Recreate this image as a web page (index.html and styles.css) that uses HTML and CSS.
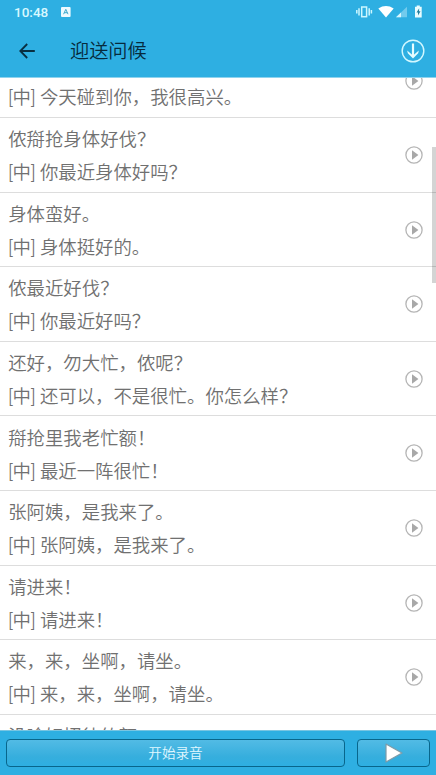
FILE: index.html
```html
<!DOCTYPE html>
<html lang="zh-CN">
<head>
<meta charset="utf-8">
<title>迎送问候</title>
<link rel="stylesheet" href="styles.css">
</head>
<body>
<svg class="defs" width="0" height="0">
  <symbol id="play" viewBox="0 0 18 18"><circle cx="9" cy="9" r="8.1" fill="none" stroke="#b5b5b5" stroke-width="1.3"/><path d="M7 4.2 13.4 9 7 13.8Z" fill="#a8a8a8"/></symbol>
</svg>
<div class="screen">
  <header class="top">
    <div class="status">
      <span class="time">10:48</span>
      <svg class="app" width="10" height="10" viewBox="0 0 10 10"><rect width="9.6" height="10" rx="1" fill="#eefaff"/><path d="M2.6 7.2 4.8 2.3 7 7.2M3.3 5.7H6.3" fill="none" stroke="#40a9cc" stroke-width="1"/></svg>
      <svg class="sys" width="68" height="14" viewBox="0 0 68 14">
        <g fill="none" stroke="#ccf7ff" stroke-width="1.5"><rect x="5.7" y="2" width="4.9" height="9.7"/><path d="M3 3.2V10.4M.8 5V8.6M13.2 3.2V10.4M15.4 5V8.6"/></g>
        <path d="M22.3 3.4Q30-1.4 37.7 3.4L30 12.6Z" fill="#fff"/>
        <path d="M51 1.8V12.2H40Z" fill="#72cbed"/><path d="M45 7.5V12.2H40Z" fill="#d8f7ff"/>
        <path d="M60.7.5H63.8V1.7H65.7V12.4H59V1.7H60.7Z" fill="#e9fcff"/><path d="M63.2 3.3 60.5 7.4H62V10.5L64.5 6.3H63Z" fill="#267f9e"/>
      </svg>
    </div>
    <div class="bar">
      <svg class="back" width="16" height="16" viewBox="0 0 16 16"><path d="M15.8 8H1.5M8.2 1 1.3 8 8.2 15" fill="none" stroke="#082f42" stroke-width="1.8"/></svg>
      <h1>迎送问候</h1>
      <svg class="down" width="24" height="24" viewBox="0 0 24 24"><circle cx="12" cy="12" r="10.8" fill="none" stroke="#d3f8ff" stroke-width="1.4"/><path d="M12 4.5V18" stroke="#e6fdff" stroke-width="2.2" fill="none"/><path d="M6.2 11.4 12 16.4 17.8 11.4 17.2 14.3 12 19.6 6.8 14.3Z" fill="#e6fdff"/></svg>
    </div>
  </header>
  <main class="list">
    <div class="row first"><p>[中] 今天碰到你，我很高兴。</p><svg class="play"><use href="#play"/></svg></div>
    <div class="row"><div><p>侬搿抢身体好伐？</p><p>[中] 你最近身体好吗？</p></div><svg class="play"><use href="#play"/></svg></div>
    <div class="row"><div><p>身体蛮好。</p><p>[中] 身体挺好的。</p></div><svg class="play"><use href="#play"/></svg></div>
    <div class="row"><div><p>侬最近好伐？</p><p>[中] 你最近好吗？</p></div><svg class="play"><use href="#play"/></svg></div>
    <div class="row"><div><p>还好，勿大忙，侬呢？</p><p>[中] 还可以，不是很忙。你怎么样？</p></div><svg class="play"><use href="#play"/></svg></div>
    <div class="row"><div><p>搿抢里我老忙额！</p><p>[中] 最近一阵很忙！</p></div><svg class="play"><use href="#play"/></svg></div>
    <div class="row"><div><p>张阿姨，是我来了。</p><p>[中] 张阿姨，是我来了。</p></div><svg class="play"><use href="#play"/></svg></div>
    <div class="row"><div><p>请进来！</p><p>[中] 请进来！</p></div><svg class="play"><use href="#play"/></svg></div>
    <div class="row"><div><p>来，来，坐啊，请坐。</p><p>[中] 来，来，坐啊，请坐。</p></div><svg class="play"><use href="#play"/></svg></div>
    <div class="row"><div><p>没啥好招待侬额</p></div></div>
    <div class="thumb"></div>
  </main>
  <footer class="bottom">
    <button class="btn record"><span>开始录音</span></button>
    <button class="btn playback"><svg width="20" height="22" viewBox="0 0 20 22"><path d="M2 2 18 11 2 20Z" fill="#fff" stroke="#7d9ba8" stroke-width="1.2" stroke-linejoin="round"/></svg></button>
  </footer>
</div>
</body>
</html>
```

FILE: styles.css
```css
* { box-sizing: border-box; }
body { margin: 0; font-family: Roboto, "Noto Sans CJK SC", sans-serif; }
.defs { display: block; height: 0; }
.screen { width: 436px; height: 775px; display: flex; flex-direction: column; overflow: hidden; background: #fff; }
.top { flex: none; height: 78px; background: #2eafe2; border-bottom: 1px solid #8fd3ee; }
.status { height: 24px; display: flex; align-items: center; padding: 0 12px 0 14px; }
.time { font-size: 13.5px; font-weight: 500; color: #d8f8ff; width: 34px; line-height: 24px; }
.app { margin-left: 13px; }
.sys { margin-left: auto; }
.bar { height: 53px; display: flex; align-items: center; padding: 0 11.5px 0 19px; }
h1 { margin: 2px 0 0 35px; font-size: 19.2px; font-weight: 350; line-height: 28px; color: #062a3c; }
.down { margin-left: auto; }
.list { flex: 1; min-height: 0; overflow: hidden; position: relative; }
.row { height: 74.6px; padding: 5.2px 13.5px 0 8.2px; display: flex; align-items: flex-start; justify-content: space-between; border-bottom: 1px solid #ddd; color: #707070; }
.first { height: 40px; padding-top: 3.4px; }
.first .play { margin-top: -9.7px; }
p { margin: 0; font-size: 18.4px; line-height: 33px; font-weight: 350; white-space: nowrap; }
.play { width: 18px; height: 18px; margin-top: 22.9px; flex: none; }
.thumb { position: absolute; right: 0; top: 69px; width: 4px; height: 136px; background: rgba(0,0,0,.17); }
.bottom { flex: none; height: 45px; display: flex; gap: 12px; padding: 8px 6px 9px; background: #2eafe2; border-top: 1px solid #79c5e2; }
.btn { height: 28px; padding: 0; border: 1px solid #08668c; border-radius: 4px; background: linear-gradient(#52bbe5, #36aedd 65%, #2eafe2); color: #e0f8ff; font: 350 13.6px "Noto Sans CJK SC", sans-serif; display: flex; align-items: center; justify-content: center; }
.record { width: 339px; padding-bottom: 2px; }
.playback { width: 73px; }
```
